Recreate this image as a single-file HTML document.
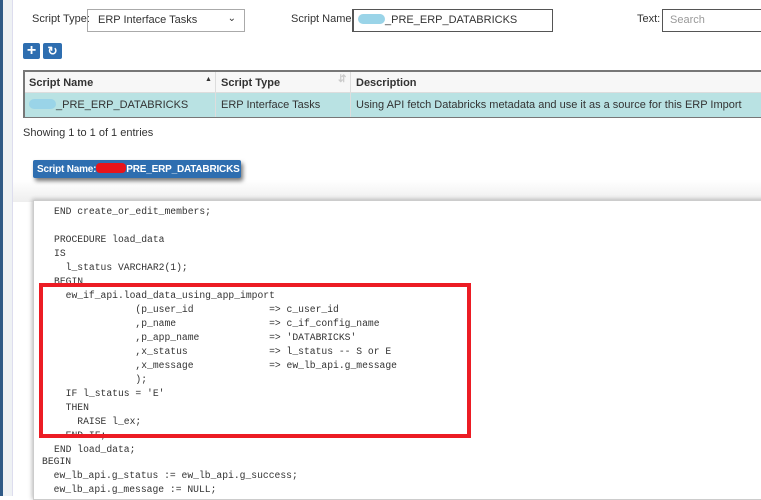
<!DOCTYPE html>
<html><head><meta charset="utf-8"><style>
*{box-sizing:border-box;margin:0;padding:0}
body{width:761px;height:496px;overflow:hidden;background:#fff;font-family:"Liberation Sans",sans-serif;font-size:11px;color:#333;position:relative}
.abs{position:absolute}
.code{font-family:"Liberation Mono",monospace;font-size:9.7px;color:#333;white-space:pre;line-height:14px}
</style></head><body>
<div class="abs" style="left:13px;top:180px;width:748px;height:22px;background:linear-gradient(#fff,#eee)"></div>
<div class="abs" style="left:0;top:0;width:3px;height:496px;background:#2f5a86"></div>
<div class="abs" style="left:3px;top:0;width:9px;height:496px;background:#eef1f4"></div>
<div class="abs" style="left:12px;top:0;width:1px;height:496px;background:#dde"></div>

<div class="abs" style="left:32px;top:13px">Script Type:</div>
<div class="abs" style="left:87px;top:9px;width:158px;height:23px;border:1px solid #aaa;padding:4px 10px">ERP Interface Tasks<span style="position:absolute;right:8px;top:3px;font-size:10px">&#8964;</span></div>
<div class="abs" style="left:291px;top:13px">Script Name:</div>
<div class="abs" style="left:352px;top:9px;width:201px;height:23px;border:1px solid #555;border-width:1px 1px 1px 2px;padding:4px 4px">
<span style="display:inline-block;width:27px;height:10px;border-radius:5px;background:#9ad4e8;vertical-align:-1px"></span>_PRE_ERP_DATABRICKS</div>
<div class="abs" style="left:637px;top:13px">Text:</div>
<div class="abs" style="left:662px;top:9px;width:110px;height:23px;border:1px solid #555;padding:4px 7px;color:#999">Search</div>

<div class="abs" style="left:23px;top:43px;width:17px;height:16px;background:#2e6eb0;border-radius:2px;color:#fff;font-weight:bold;font-size:16px;line-height:16px;text-align:center">+</div>
<div class="abs" style="left:43px;top:43px;width:19px;height:16px;background:#2e6eb0;border-radius:2px;color:#fff;font-weight:bold;font-size:12px;line-height:16px;text-align:center">&#8635;</div>

<div class="abs" style="left:23px;top:70px;width:745px;height:48px;border:2px solid #777;border-right:none;background:#fff">
 <div class="abs" style="left:0;top:0;width:745px;height:21px;background:#f7f7f7;border-bottom:1px solid #ddd;font-weight:bold">
  <span class="abs" style="left:4px;top:5px">Script Name</span><span class="abs" style="left:180px;top:4px;font-size:7px">&#9650;</span>
  <span class="abs" style="left:196px;top:5px">Script Type</span><span class="abs" style="left:313px;top:2px;color:#ccc;font-size:10px">&#8693;</span>
  <span class="abs" style="left:331px;top:5px">Description</span>
 </div>
 <div class="abs" style="left:0;top:21px;width:745px;height:24px;background:#b9e2e3">
  <span class="abs" style="left:4px;top:6px"><span style="display:inline-block;width:27px;height:10px;border-radius:5px;background:#9ad4e8;vertical-align:-1px"></span>_PRE_ERP_DATABRICKS</span>
  <span class="abs" style="left:196px;top:6px">ERP Interface Tasks</span>
  <span class="abs" style="left:331px;top:6px">Using API fetch Databricks metadata and use it as a source for this ERP Import</span>
 </div>
 <div class="abs" style="left:190px;top:0;width:1px;height:45px;background:#ddd"></div>
 <div class="abs" style="left:325px;top:0;width:1px;height:45px;background:#ddd"></div>
</div>
<div class="abs" style="left:23px;top:127px">Showing 1 to 1 of 1 entries</div>

<div class="abs" style="left:33px;top:160px;width:208px;height:18px;background:#2e6eb0;border-radius:2px;box-shadow:2px 3px 4px #777;color:#fff;font-weight:bold;padding:3px 4px;white-space:nowrap;font-size:10px;letter-spacing:-0.2px;overflow:hidden">Script Name:<span style="display:inline-block;width:30px;height:10px;background:#e8141b;border-radius:4px;vertical-align:-1px"></span>PRE_ERP_DATABRICKS</div>

<div class="abs" style="left:33px;top:200px;width:740px;height:300px;background:#fff;border:1px solid #ccc;box-shadow:-1px -1px 4px #bbb"></div>
<div class="abs code" style="left:54px;top:191px;clip-path:inset(9px 0 0 0)">  x                   x
END create_or_edit_members;

PROCEDURE load_data
IS
  l_status VARCHAR2(1);
BEGIN
  ew_if_api.load_data_using_app_import
              (p_user_id             =&gt; c_user_id
              ,p_name                =&gt; c_if_config_name
              ,p_app_name            =&gt; 'DATABRICKS'
              ,x_status              =&gt; l_status -- S or E
              ,x_message             =&gt; ew_lb_api.g_message
              );
  IF l_status = 'E'
  THEN
    RAISE l_ex;
  END IF;
END load_data;</div>
<div class="abs code" style="left:42px;top:455px">BEGIN
  ew_lb_api.g_status := ew_lb_api.g_success;
  ew_lb_api.g_message := NULL;</div>
<div class="abs" style="left:39px;top:283px;width:432px;height:155px;border:4px solid #ec1c24"></div>
</body></html>
